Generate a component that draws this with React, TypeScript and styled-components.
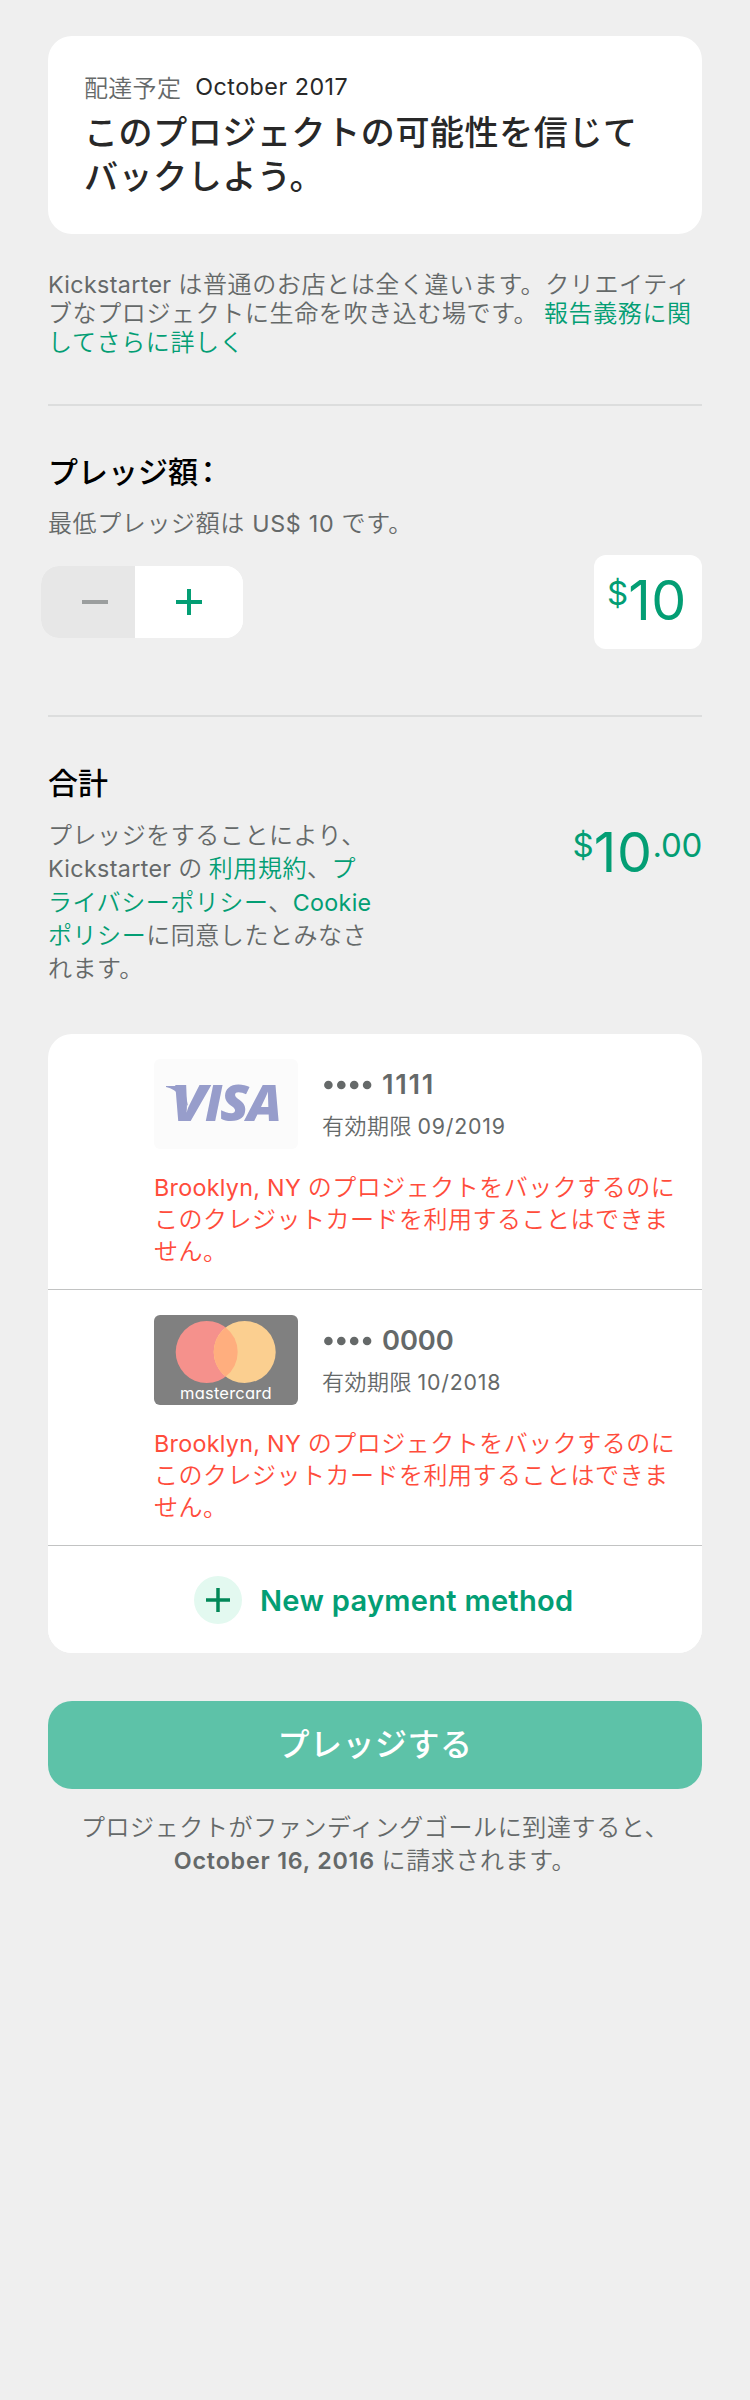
import React from "react";
import styled, { createGlobalStyle } from "styled-components";

const GREEN = "#039e74";
const GRAY = "#656969";

const GlobalStyle = createGlobalStyle`
  *, *::before, *::after { box-sizing: border-box; }
  body {
    margin: 0;
    background: #efefef;
    font-family: "Noto Sans CJK JP", sans-serif;
  }
  h1, h2, p { margin: 0; }
  button { font: inherit; border: 0; padding: 0; }
`;

const Page = styled.main`
  display: flex;
  flex-direction: column;
  width: 750px;
  height: 2400px;
  padding: 36px 48px;
  background: #efefef;
`;

const Latin = styled.span<{ $track?: number; $size?: string; $weight?: number }>`
  font-family: Inter, "Noto Sans CJK JP", sans-serif;
  font-size: ${(p) => p.$size ?? "0.97em"};
  font-weight: ${(p) => p.$weight ?? 400};
  line-height: 0;
  letter-spacing: ${(p) => p.$track ?? 0}px;
`;

const Line = styled.span`
  display: block;
  white-space: pre;
`;

const Link = styled.a`
  color: ${GREEN};
  text-decoration: none;
`;

const RewardCard = styled.section`
  height: 198px;
  padding: 35px 36px 0;
  border-radius: 24px;
  background: #fff;
`;

const Delivery = styled.p`
  display: flex;
  gap: 14px;
  height: 32px;
  line-height: 32px;
  font-size: 24px;
  font-weight: 350;
  letter-spacing: 0.3px;
  color: ${GRAY};
`;

const DeliveryDate = styled(Latin)`
  line-height: 32px;
  color: #282828;
`;

const Title = styled.h1`
  margin-top: 6px;
  font-size: 34px;
  font-weight: 500;
  line-height: 44px;
  letter-spacing: 0.6px;
  color: #282828;
`;

const Body = styled.p<{ $leading: number; $top: number; $track?: number }>`
  margin-top: ${(p) => p.$top}px;
  font-size: 24px;
  font-weight: 350;
  line-height: ${(p) => p.$leading}px;
  letter-spacing: ${(p) => p.$track ?? 0.62}px;
  color: ${GRAY};
`;

const Divider = styled.hr<{ $top: number }>`
  flex: none;
  width: 100%;
  height: 2px;
  margin: ${(p) => p.$top}px 0 0;
  border: 0;
  background: #dcdddd;
`;

const Heading = styled.h2<{ $top: number }>`
  margin-top: ${(p) => p.$top}px;
  font-size: 30px;
  font-weight: 500;
  line-height: 40px;
  color: #000;
`;

const Colon = styled.span`
  margin-left: -5px;
`;

const AmountRow = styled.div`
  display: flex;
  align-items: center;
  justify-content: space-between;
  height: 94px;
  margin: 17px 0 0 -7px;
`;

const Stepper = styled.div`
  display: flex;
  width: 202px;
  height: 72px;
  overflow: hidden;
  border-radius: 18px;
  background: #fff;
`;

const StepButton = styled.button<{ $off?: boolean }>`
  display: flex;
  align-items: center;
  justify-content: center;
  width: ${(p) => (p.$off ? 94 : 108)}px;
  padding-left: ${(p) => (p.$off ? 14 : 0)}px;
  background: ${(p) => (p.$off ? "#e7e7e7" : "#fff")};
  color: ${(p) => (p.$off ? "#9b9e9e" : GREEN)};
`;

const AmountField = styled.div`
  width: 108px;
  height: 94px;
  padding: 17px 0 0 13px;
  border-radius: 12px;
  background: #fff;
`;

const Price = styled.div`
  display: flex;
  align-items: flex-start;
  font-family: Inter, sans-serif;
  color: ${GREEN};
`;

const PriceSmall = styled.span<{ $track?: number }>`
  font-size: 33px;
  line-height: 42px;
  letter-spacing: ${(p) => p.$track ?? 0}px;
`;

const PriceBig = styled.span`
  font-size: 55.5px;
  line-height: 56px;
  letter-spacing: 0.6px;
`;

const TotalRow = styled.div`
  display: flex;
  justify-content: space-between;
  height: 167px;
  margin-top: 16px;
`;

const TotalPrice = styled.div`
  padding-top: 7px;
`;

const PaymentCard = styled.section`
  height: 619px;
  margin-top: 50px;
  overflow: hidden;
  border-radius: 24px;
  background: #fff;
`;

const PaymentRow = styled.div`
  height: 256px;
  padding: 25px 0 0 106px;
  border-bottom: 1px solid #c2c3c3;
`;

const CardSummary = styled.div`
  display: flex;
  gap: 26px;
  height: 90px;
`;

const CardText = styled.div`
  padding-top: 10px;
  color: ${GRAY};
`;

const CardNumber = styled.div`
  display: flex;
  align-items: center;
  gap: 10px;
  height: 32px;
`;

const Expiry = styled.div`
  height: 30px;
  margin: 8px 0 0 -2px;
  font-size: 22px;
  font-weight: 350;
  line-height: 30px;
  letter-spacing: 0.5px;
`;

const ErrorText = styled.p`
  margin-top: 21px;
  font-size: 24px;
  font-weight: 350;
  line-height: 32px;
  letter-spacing: 0.5px;
  color: #ff4c3b;
`;

const NewPayment = styled.button`
  display: flex;
  align-items: center;
  width: 100%;
  height: 107px;
  padding-left: 146px;
  background: #fff;
  color: ${GREEN};
`;

const NewPaymentLabel = styled(Latin)`
  padding-top: 2px;
`;

const PlusCircle = styled.span`
  display: flex;
  align-items: center;
  justify-content: center;
  width: 48px;
  height: 48px;
  margin-right: 18px;
  border-radius: 50%;
  background: #e3f9f0;
  color: #028858;
`;

const PledgeButton = styled.button`
  height: 88px;
  margin-top: 48px;
  padding-bottom: 6px;
  border-radius: 24px;
  background: #5dc2a8;
  color: #fff;
  font-size: 32px;
  font-weight: 500;
  line-height: 82px;
  letter-spacing: 0.5px;
`;

const Footnote = styled(Body)`
  text-align: center;
`;

function Minus() {
  return (
    <svg width="26" height="26" viewBox="0 0 26 26">
      <path d="M0 13h26" stroke="currentColor" strokeWidth="4" />
    </svg>
  );
}

function Plus({ size, stroke }: { size: number; stroke: number }) {
  return (
    <svg width={size} height={size} viewBox={`0 0 ${size} ${size}`}>
      <path
        d={`M0 ${size / 2}h${size}M${size / 2} 0v${size}`}
        stroke="currentColor"
        strokeWidth={stroke}
      />
    </svg>
  );
}

function VisaLogo() {
  return (
    <svg width="144" height="90" viewBox="0 0 144 90">
      <rect width="144" height="90" rx="6" fill="#fbfbfb" />
      <g fill="#979dcb" fontFamily="Open Sans" fontWeight="800" fontStyle="italic" fontSize="49">
        <path d="M12 27h13q5 0 6 5l3 15-8-10q-5-7-14-9z" />
        <text x="17" y="62" textLength="36" lengthAdjust="spacingAndGlyphs">V</text>
        <text x="51" y="62">I</text>
        <text x="66" y="62" textLength="29" lengthAdjust="spacingAndGlyphs">S</text>
        <text x="93" y="62" textLength="35" lengthAdjust="spacingAndGlyphs">A</text>
      </g>
    </svg>
  );
}

function MastercardLogo() {
  return (
    <svg width="144" height="90" viewBox="0 0 144 90">
      <rect width="144" height="90" rx="6" fill="#808080" />
      <circle cx="52.7" cy="37" r="31" fill="#f5918c" />
      <circle cx="90.7" cy="37" r="31" fill="#fbcf90" />
      <path d="M71.7 12.5a31 31 0 0 1 0 49a31 31 0 0 1 0-49z" fill="#ffae7e" />
      <text
        x="26"
        y="84"
        textLength="91.5"
        fill="#fff"
        fontFamily="Inter"
        fontWeight="400"
        fontSize="16.5"
        style={{ fontFeatureSettings: '"cv11"' }}
      >
        mastercard
      </text>
    </svg>
  );
}

function CardDots() {
  return (
    <svg width="48" height="10" viewBox="0 0 48 10">
      {[4.4, 17.3, 30.2, 43.1].map((x) => (
        <circle key={x} cx={x} cy="5" r="4.3" fill="currentColor" />
      ))}
    </svg>
  );
}

interface SavedCardProps {
  logo: React.ReactNode;
  digits: string;
  expiry: string;
  track: number;
}

function SavedCard({ logo, digits, expiry, track }: SavedCardProps) {
  return (
    <PaymentRow>
      <CardSummary>
        {logo}
        <CardText>
          <CardNumber>
            <CardDots />
            <Latin $size="27.3px" $weight={600} $track={track}>{digits}</Latin>
          </CardNumber>
          <Expiry>
            有効期限 <Latin $track={0.8}>{expiry}</Latin>
          </Expiry>
        </CardText>
      </CardSummary>
      <ErrorText>
        <Line><Latin $track={0.3}>Brooklyn, NY </Latin>のプロジェクトをバックするのに</Line>
        <Line>このクレジットカードを利用することはできま</Line>
        <Line>せん。</Line>
      </ErrorText>
    </PaymentRow>
  );
}

export default function App() {
  return (
    <Page>
      <GlobalStyle />
      <RewardCard>
        <Delivery>
          配達予定
          <DeliveryDate $track={0.5}>October 2017</DeliveryDate>
        </Delivery>
        <Title>
          <Line>このプロジェクトの可能性を信じて</Line>
          <Line>バックしよう。</Line>
        </Title>
      </RewardCard>

      <Body $leading={29} $top={34}>
        <Line><Latin $track={0.35}>Kickstarter </Latin>は普通のお店とは全く違います。クリエイティ</Line>
        <Line>ブなプロジェクトに生命を吹き込む場です。 <Link>報告義務に関</Link></Line>
        <Line><Link>してさらに詳しく</Link></Line>
      </Body>

      <Divider $top={49} />

      <Heading $top={44}>プレッジ額<Colon>：</Colon></Heading>
      <Body $leading={32} $top={16}>
        最低プレッジ額は<Latin $track={0.7}> US$ 10 </Latin>です。
      </Body>
      <AmountRow>
        <Stepper>
          <StepButton $off aria-label="減らす"><Minus /></StepButton>
          <StepButton aria-label="増やす"><Plus size={26} stroke={4} /></StepButton>
        </Stepper>
        <AmountField>
          <Price>
            <PriceSmall>$</PriceSmall>
            <PriceBig>10</PriceBig>
          </Price>
        </AmountField>
      </AmountRow>

      <Divider $top={66} />

      <Heading $top={44}>合計</Heading>
      <TotalRow>
        <Body $leading={33.25} $top={0} $track={0.55}>
          <Line>プレッジをすることにより、</Line>
          <Line><Latin $track={0.35}>Kickstarter </Latin>の <Link>利用規約</Link>、<Link>プ</Link></Line>
          <Line><Link>ライバシーポリシー</Link>、<Link><Latin $track={0.3}>Cookie</Latin></Link></Line>
          <Line><Link>ポリシー</Link>に同意したとみなさ</Line>
          <Line>れます。</Line>
        </Body>
        <TotalPrice>
          <Price>
            <PriceSmall>$</PriceSmall>
            <PriceBig>10</PriceBig>
            <PriceSmall $track={-0.3}>.00</PriceSmall>
          </Price>
        </TotalPrice>
      </TotalRow>

      <PaymentCard>
        <SavedCard logo={<VisaLogo />} digits="1111" expiry="09/2019" track={1.7} />
        <SavedCard logo={<MastercardLogo />} digits="0000" expiry="10/2018" track={-0.1} />
        <NewPayment>
          <PlusCircle><Plus size={24} stroke={3.5} /></PlusCircle>
          <NewPaymentLabel $size="29.1px" $weight={600} $track={0.27}>New payment method</NewPaymentLabel>
        </NewPayment>
      </PaymentCard>

      <PledgeButton>プレッジする</PledgeButton>

      <Footnote $leading={33} $top={20}>
        <Line>プロジェクトがファンディングゴールに到達すると、</Line>
        <Line><Latin $weight={600} $track={0.8}>October 16, 2016 </Latin>に請求されます。</Line>
      </Footnote>
    </Page>
  );
}
